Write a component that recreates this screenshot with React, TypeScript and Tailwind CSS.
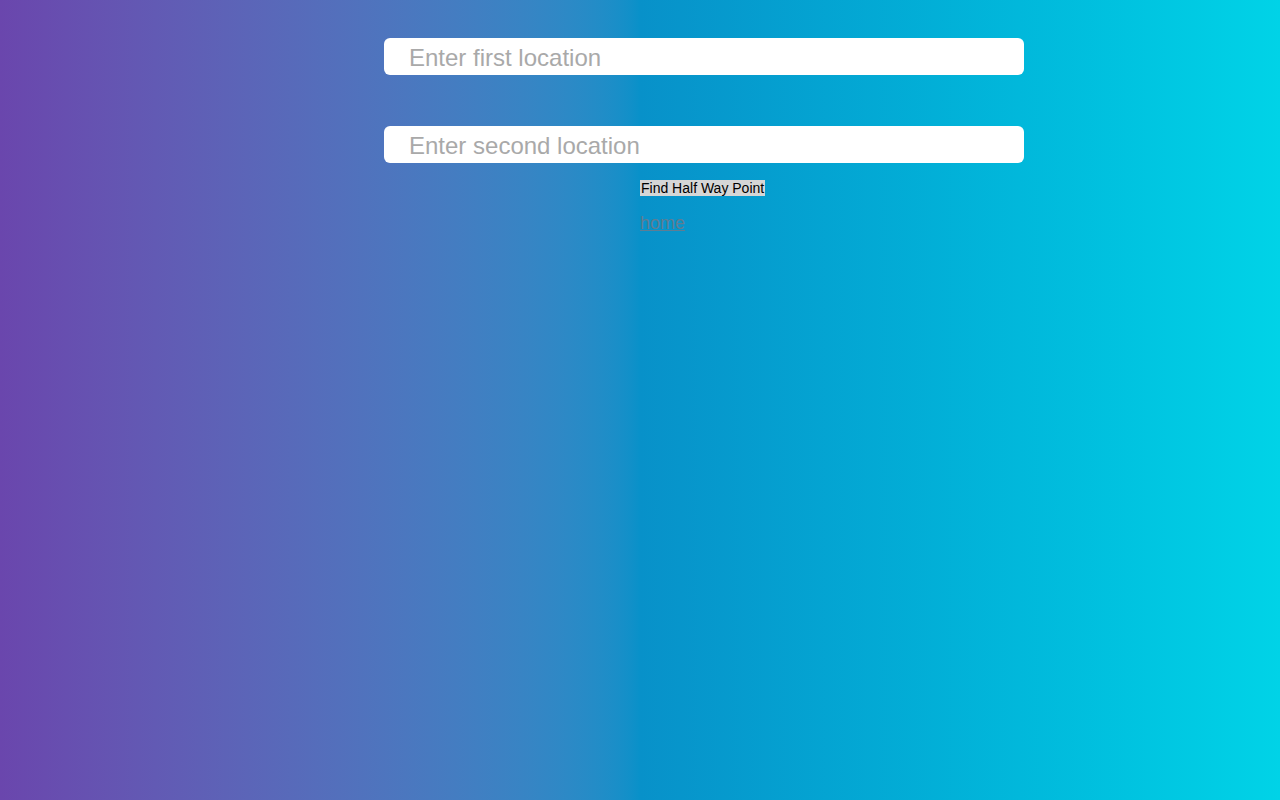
export default function App() {
  return (
    <main
      className="min-h-screen w-full bg-gradient-to-r from-[#6a46ad] via-[#0891c9] to-[#00d3e7] pt-[38px]"
      style={{ fontFamily: '"Liberation Sans", Arial, sans-serif' }}
    >
      <div className="ml-[384px] flex w-[640px] flex-col gap-[51px]">
        <input
          type="text"
          placeholder="Enter first location"
          className="h-[37px] w-full rounded-[6px] bg-white pl-[25px] pt-[2px] text-[24px] text-[#333] placeholder:text-[#a9a9a9] outline-none"
        />
        <input
          type="text"
          placeholder="Enter second location"
          className="h-[37px] w-full rounded-[6px] bg-white pl-[25px] pt-[2px] text-[24px] text-[#333] placeholder:text-[#a9a9a9] outline-none"
        />
      </div>

      <div className="ml-[640px] mt-[17px] flex flex-col items-start gap-[17px]">
        <button className="h-[16px] bg-[#d6d6d6] px-[1px] text-[14px] leading-[16px] text-black">
          Find Half Way Point
        </button>
        <a href="#" className="text-[18px] leading-[20px] text-[#5f7d93] underline">
          home
        </a>
      </div>
    </main>
  );
}
